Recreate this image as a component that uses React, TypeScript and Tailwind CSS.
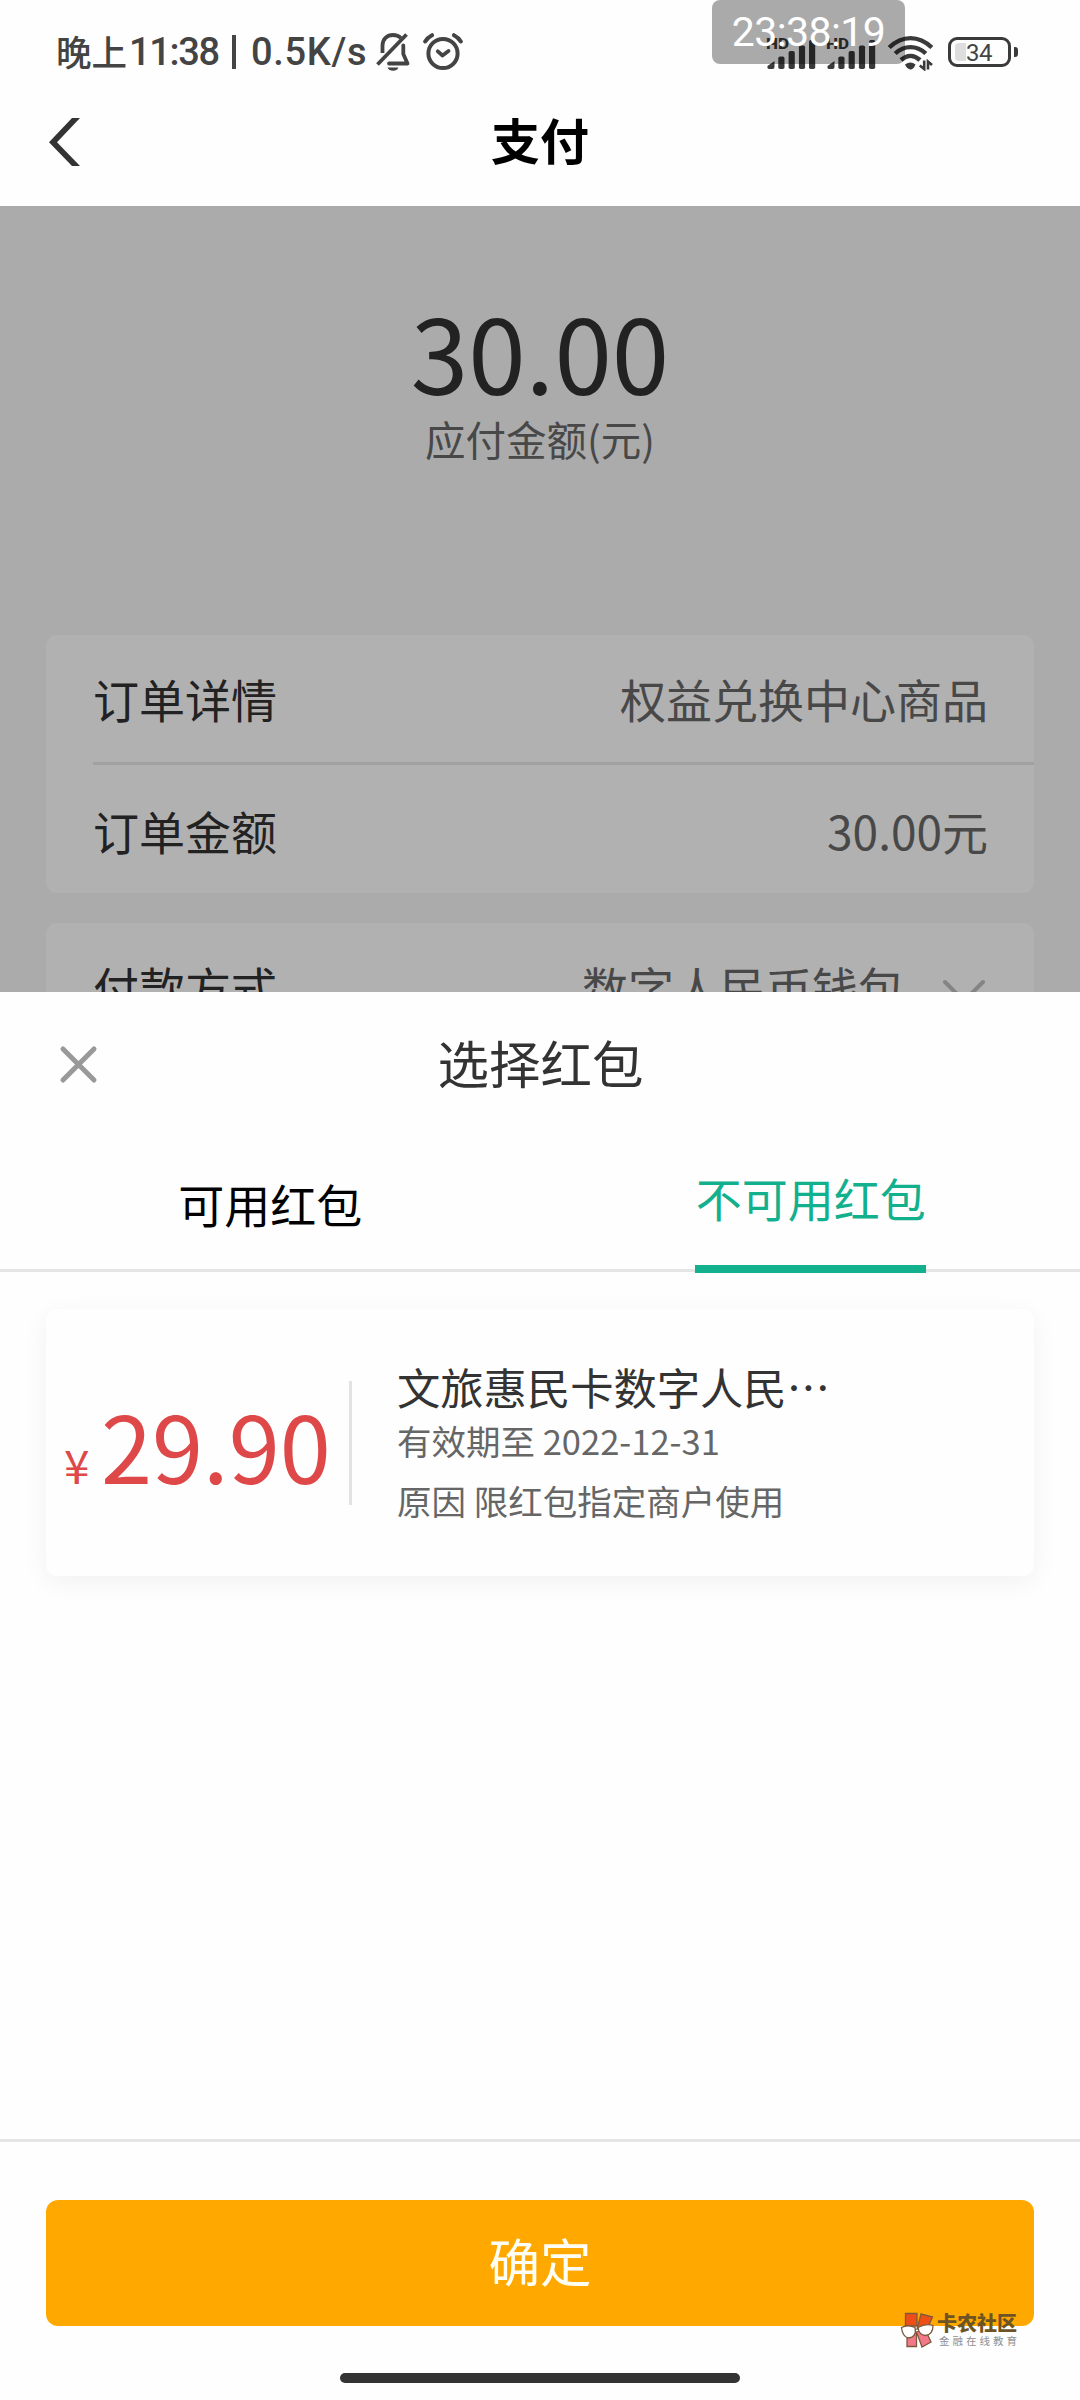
import React from "react";

function SignalBars() {
  return (
    <svg width="50" height="36" viewBox="0 0 50 36" fill="#3a3a3a">
      <text x="0" y="15" fontFamily="Roboto" fontWeight="800" fontSize="15.5" textLength="23" lengthAdjust="spacingAndGlyphs">HD</text>
      <path d="M1.5 32 L8.5 27 V33 Q8.5 35 6.5 35 H3 Q1 35 1.5 32Z" />
      <rect x="12.3" y="22.5" width="6.2" height="12.5" rx="1.8" />
      <rect x="22.6" y="17" width="6.2" height="18" rx="1.8" />
      <rect x="32.9" y="11.5" width="6.2" height="23.5" rx="1.8" />
      <rect x="43" y="6" width="6.2" height="29" rx="1.8" />
    </svg>
  );
}

function BellOffIcon() {
  return (
    <svg width="36" height="40" viewBox="0 0 36 40" fill="none" stroke="#444" strokeWidth="3.8">
      <path d="M7.5 21 V13.5 C7.5 7 12 3 18 3 C21.5 3 24 4.2 25.8 6" />
      <path d="M28.3 13.5 V22 L32.5 31.5 H14" strokeLinejoin="round" strokeLinecap="round" />
      <path d="M2.5 32.5 L31.5 2.5" />
      <path d="M12.5 35.5 H23.5 Q22 38.8 18 38.8 Q14 38.8 12.5 35.5Z" fill="#444" stroke="none" />
    </svg>
  );
}

function AlarmIcon() {
  return (
    <svg width="40" height="40" viewBox="0 0 40 40" fill="none" stroke="#444" strokeLinecap="round">
      <circle cx="20" cy="21.5" r="14.6" strokeWidth="4" />
      <path d="M14.8 19.3 L19.5 23.5 L25.5 19" strokeWidth="3.8" strokeLinejoin="round" />
      <path d="M2.2 9.5 Q4.5 5.5 9 3.2" strokeWidth="4" />
      <path d="M31 3.2 Q35.5 5.5 37.8 9.5" strokeWidth="4" />
    </svg>
  );
}

function WifiIcon() {
  return (
    <svg width="48" height="36" viewBox="0 0 48 36" fill="none" stroke="#3a3a3a" strokeWidth="4.4">
      <path d="M2.2 12.5 Q12 3.1 23.5 3.1 Q35 3.1 44.8 12.5" />
      <path d="M8.2 18.5 Q15 12.1 23.5 12.1 Q32 12.1 38.8 18.5" />
      <path d="M14 25 Q18.5 20.9 23.5 20.9 Q28.5 20.9 33 25" />
      <path d="M18 29.5 Q23.5 25.5 28.5 29.5 Q26.5 34.5 23.5 34.5 Q20 34 18 29.5Z" fill="#3a3a3a" stroke="none" />
      <path d="M37.2 25.5 V34 L32.8 30.5 M41 34.5 V26.5 L45 30" strokeWidth="2.6" />
    </svg>
  );
}

function StatusBar() {
  return (
    <div className="relative h-[80px] w-full text-[#444]">
      <div className="flex h-[104px] items-center pl-[56px]">
        <span className="w-[73px] pb-[2px] text-[35.5px] font-medium whitespace-nowrap">晚上</span>
        <span className="w-[103px] font-[Roboto] text-[38px] font-medium tracking-[-1.3px] whitespace-nowrap">11:38</span>
        <span className="mr-[15px] h-[34px] w-[4px] bg-[#444]" />
        <span className="w-[122px] font-[Roboto] text-[38px] font-medium tracking-[0.7px] whitespace-nowrap">0.5K/s</span>
        <span className="mr-[12px] ml-[2px] flex"><BellOffIcon /></span>
        <AlarmIcon />
        <span className="ml-[303px] flex"><SignalBars /></span>
        <span className="ml-[10px] flex"><SignalBars /></span>
        <span className="mt-[1px] ml-[11px] flex"><WifiIcon /></span>
        <span className="ml-[13px] flex h-[30px] w-[63px] items-center rounded-[9px] border-[3px] border-[#3a3a3a] pl-[4px]">
          <span className="h-[18px] w-[11px] rounded-l-[4px] bg-[#dedede]" />
          <span className="pt-[1px] font-[Roboto] text-[24px] leading-none tracking-[-0.5px]">34</span>
        </span>
        <span className="ml-[3px] h-[10px] w-[4px] rounded-r-[3px] bg-[#3a3a3a]" />
      </div>
      <div className="absolute top-0 left-[712px] flex h-[64px] w-[193px] items-center justify-center rounded-[8px] bg-black/33 font-[Roboto] text-[41px] leading-none tracking-[-0.6px] text-white">
        23:38:19
      </div>
    </div>
  );
}

function Row({ label, value, arrow }: { label: string; value: string; arrow?: boolean }) {
  return (
    <div className="flex h-[127px] items-center text-[46px] text-[#222]">
      <span>{label}</span>
      <span className="ml-auto text-[#484848]">{value}</span>
      {arrow && (
        <svg className="mt-[12px] ml-[38px]" width="44" height="28" viewBox="0 0 44 28" fill="none" stroke="#848484" strokeWidth="4" strokeLinecap="round">
          <path d="M3 3 L22 22 L41 3" />
        </svg>
      )}
    </div>
  );
}

function Watermark() {
  return (
    <div className="absolute top-[2312px] left-[900px] flex items-start">
      <svg width="34" height="37" viewBox="0 0 34 37" stroke="#7c5a3c" strokeWidth="1.3">
        <path d="M5.5 1.5 H17 V14 H5.5Z" fill="#f04e17" />
        <path d="M21 2 L32.5 5 L27 17 H17Z" fill="#f04e17" />
        <path d="M7 21 H16.5 V34.5 H7Z" fill="#f2788a" />
        <path d="M16.5 20 L25 17 L31 30 L22 35Z" fill="#f2788a" />
        <path d="M1.5 15.5 Q8 12 15 15.5 Q17 25 8.5 26 Q2.5 25 1.5 15.5Z" fill="#fff" />
        <path d="M18 15.5 Q26 11 33 13.5 Q33 22.5 25.5 23.5 Q19 23 18 15.5Z" fill="#fff" />
      </svg>
      <div className="ml-[3px] flex flex-col whitespace-nowrap">
        <span className="h-[23px] text-[20px] leading-[22px] font-black text-[#6e5424]">卡农社区</span>
        <span className="pl-[2px] text-[10.5px] leading-[12px] tracking-[3px] text-[#909090]">金融在线教育</span>
      </div>
    </div>
  );
}

export default function App() {
  return (
    <div lang="zh-CN" className="relative flex h-[2400px] w-[1080px] flex-col overflow-hidden bg-[#fefefe] font-['Noto_Sans_CJK_SC',sans-serif]">
      <StatusBar />
      <header className="relative flex h-[126px] items-center justify-center pb-[9px]">
        <svg className="absolute top-[37px] left-[48px]" width="34" height="50" viewBox="0 0 34 50" fill="#333">
          <path d="M24 1 H32 L9 25.2 L32 49 H24 L1 25.2Z" />
        </svg>
        <h1 className="text-[49px] leading-none font-bold text-black">支付</h1>
      </header>

      <main className="h-[786px] overflow-hidden bg-[#ababab]">
        <div className="flex flex-col items-center pt-[88px]">
          <div className="h-[117px] text-[103.5px] leading-[112px] text-[#222]">30.00</div>
          <div className="h-[56px] text-[40.5px] leading-[56px] text-[#484848]">应付金额(元)</div>
        </div>
        <div className="mx-[46px] mt-[168px] h-[258px] rounded-[11px] bg-[#b1b1b1] pl-[47px]">
          <div className="border-b-[3px] border-[#a1a1a1] pr-[46px]">
            <Row label="订单详情" value="权益兑换中心商品" />
          </div>
          <div className="pt-[2px] pr-[46px]">
            <Row label="订单金额" value="30.00元" />
          </div>
        </div>
        <div className="mx-[46px] mt-[30px] h-[258px] rounded-[11px] bg-[#b1b1b1] pr-[48px] pl-[47px]">
          <Row label="付款方式" value="数字人民币钱包" arrow />
        </div>
      </main>

      <section className="flex h-[1408px] flex-col bg-[#fefefe]">
        <div className="relative flex h-[142px] items-center justify-center pb-[3px] pl-[1px]">
          <svg className="absolute top-[52px] left-[58px]" width="41" height="41" viewBox="0 0 41 41" stroke="#999" strokeWidth="5" strokeLinecap="round">
            <path d="M5 5 L36 36 M36 5 L5 36" />
          </svg>
          <h2 className="text-[51.5px] leading-none text-[#333]">选择红包</h2>
        </div>
        <div className="flex h-[138px] border-b-[3px] border-[#e5e5e5] text-[46px]">
          <div className="flex flex-1 justify-center pt-[32px] pl-[1px] leading-[74px] text-black">可用红包</div>
          <div className="flex flex-1 justify-center pl-[2px]">
            <div className="h-[139px] w-[231px] border-b-[8px] border-[#12b08d] pt-[26px] text-center leading-[74px] text-[#12b08d]">不可用红包</div>
          </div>
        </div>
        <article className="mx-[46px] mt-[37px] flex h-[267px] items-center rounded-[11px] bg-[#fefefe] shadow-[0_6px_26px_rgba(0,0,0,0.055)]">
          <div className="flex h-[124px] w-[306px] items-baseline border-r-[3px] border-[#e2e2e2] pl-[18px] leading-[125px] text-[#de4848]">
            <span className="w-[37px] text-[46px]">¥</span>
            <span className="text-[92px]">29.90</span>
          </div>
          <div className="flex flex-col pb-[1px] pl-[45px] whitespace-nowrap">
            <span className="text-[43.3px] leading-[56px] text-[#333]">文旅惠民卡数字人民…</span>
            <span className="text-[34.5px] leading-[52px] text-[#666]">有效期至 2022-12-31</span>
            <span className="mt-[8px] text-[34.5px] leading-[52px] text-[#666]">原因 限红包指定商户使用</span>
          </div>
        </article>
        <footer className="mt-auto flex h-[261px] flex-col items-center border-t-[3px] border-[#e5e5e5] pt-[58px]">
          <button className="h-[126px] w-[988px] rounded-[12px] bg-[#ffa900] pb-[6px] text-[51.5px] leading-none text-[#fffef4]">确定</button>
          <div className="mt-[47px] h-[10px] w-[400px] rounded-full bg-[#333]" />
        </footer>
      </section>
      <Watermark />
    </div>
  );
}
